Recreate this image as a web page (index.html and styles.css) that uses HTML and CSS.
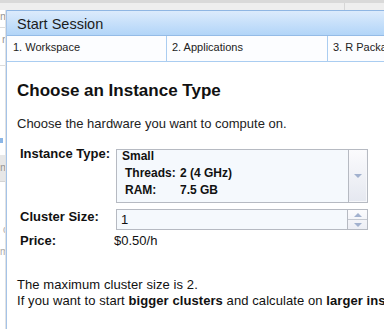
FILE: index.html
```html
<!DOCTYPE html>
<html lang="en">
<head>
    <meta charset="UTF-8">
    <meta name="viewport" content="width=device-width, initial-scale=1.0">
    <title>Start Session</title>
    <link rel="stylesheet" href="styles.css">
</head>
<body>

    <!-- page behind the dialog -->
    <div class="backdrop">
        <div class="bd-top"></div>
        <div class="bd-side">
            <div class="bd-row r1"><span>m</span></div>
            <div class="bd-row r2"><span>n</span></div>
            <div class="bd-row r3"></div>
            <div class="bd-row r4"><i class="bd-mark"></i></div>
            <div class="bd-row r5"></div>
            <div class="bd-row r6"><span>m</span></div>
            <div class="bd-row r7">
                <span class="small">c</span>
                <span class="small">r</span>
                <span class="small">m</span>
            </div>
        </div>
    </div>

    <!-- Start Session dialog -->
    <div class="dialog">
        <div class="dlg-title">Start Session</div>

        <div class="tabs">
            <div class="tab first">1. Workspace</div>
            <div class="tab second">2. Applications</div>
            <div class="tab">3. R Packages</div>
        </div>

        <div class="content">
            <h3>Choose an Instance Type</h3>
            <p class="lead">Choose the hardware you want to compute on.</p>

            <div class="form">
                <div class="row">
                    <label class="row-label">Instance Type:</label>
                    <div class="select">
                        <div class="select-body">
                            <div class="opt-name">Small</div>
                            <table class="opt-specs">
                                <tr><td class="spec-key">Threads:</td><td>2 (4 GHz)</td></tr>
                                <tr><td class="spec-key">RAM:</td><td>7.5 GB</td></tr>
                            </table>
                        </div>
                        <div class="select-btn"><i class="arrow down"></i></div>
                    </div>
                </div>

                <div class="row row-cluster">
                    <label class="row-label">Cluster Size:</label>
                    <div class="spin">
                        <div class="spin-value">1</div>
                        <div class="spin-btns">
                            <div class="spin-up"><i class="arrow up"></i></div>
                            <div class="spin-down"><i class="arrow down"></i></div>
                        </div>
                    </div>
                </div>

                <div class="row row-price">
                    <label class="row-label">Price:</label>
                    <span class="price">$0.50/h</span>
                </div>
            </div>

            <p class="note">
                The maximum cluster size is 2.<br>
                If you want to start <b>bigger clusters</b> and calculate on <b>larger instances</b>, please contact us.
            </p>
        </div>
    </div>

</body>
</html>
```

FILE: styles.css
```css
body {
    margin: 0;
    width: 384px;
    height: 329px;
    overflow: hidden;
    position: relative;
    background: #ffffff;
    font-family: "Liberation Sans", Arial, sans-serif;
    color: #222;
}

/* backdrop page */
.backdrop {
    height: 100%;
}

.bd-top {
    height: 7px;
    border-top: 3px solid #d9d9d9;
    background: linear-gradient(to right, #eeeeee 344px, #d6d6d6 344px, #d6d6d6 345px, #eeeeee 345px);
}

.bd-side {
    width: 5px;
    border-right: 1px solid #e2e2e2;
    height: 319px;
    overflow: hidden;
}

.bd-row {
    text-align: right;
    font-size: 11px;
    color: #999;
    white-space: nowrap;
}

.bd-row span {
    display: block;
    margin-right: -3px;
}

.r1 { height: 17px; line-height: 12px; border-bottom: 1px solid #dcdcdc; }
.r2 { height: 37px; line-height: 22px; border-bottom: 1px solid #dcdcdc; }
.r3 { height: 72px; }
.r4 { height: 6px; }
.r5 { height: 11px; }
.r6 { height: 26px; line-height: 24px; background: #e7e7e7; border-bottom: 1px solid #d4d4d4; }
.r7 { padding-top: 42px; }

.bd-row .small {
    font-size: 10px;
    line-height: 11px;
    color: #aaa;
}

.bd-mark {
    display: block;
    width: 3px;
    height: 5px;
    background: #8bb6e6;
}

/* dialog */
.dialog {
    position: absolute;
    left: 6px;
    top: 10px;
    width: 420px;
    height: 330px;
    background: #ffffff;
    border-left: 1px solid #a4c3e8;
}

.dlg-title {
    height: 23px;
    padding-top: 1px;
    padding-left: 10px;
    border-top: 1px solid #8fb6e3;
    border-bottom: 1px solid #94bbe6;
    background: linear-gradient(#dcebfc, #b2d5f8);
    font-size: 14.5px;
    line-height: 24px;
    color: #1c1c1c;
}

.tabs {
    display: flex;
    height: 25px;
    border-bottom: 1px solid #aacdf1;
    background: #fcfdff;
    font-size: 11px;
    line-height: 23px;
    color: #222;
}

.tab {
    padding-left: 5px;
    white-space: nowrap;
    box-sizing: border-box;
}

.tab.first {
    width: 160px;
    padding-left: 6px;
    border-right: 1px solid #aacdf1;
}

.tab.second {
    width: 161px;
    border-right: 1px solid #aacdf1;
}

.content {
    padding: 19px 10px 0;
}

h3 {
    margin: 0;
    font-size: 17px;
    line-height: 20px;
    font-weight: bold;
    color: #111;
}

.lead {
    margin: 15px 0 0;
    font-size: 13px;
    line-height: 16px;
}

/* form */
.form {
    margin: 14px 0 0 3px;
}

.row {
    display: flex;
    align-items: flex-start;
}

.row-label {
    width: 96px;
    flex-shrink: 0;
    font-size: 13px;
    line-height: 16px;
    font-weight: bold;
    color: #111;
}

.select {
    display: flex;
    width: 252px;
    height: 54px;
    margin-top: 3px;
    box-sizing: border-box;
    border: 1px solid #b6bac2;
    background: #f5f9fd;
}

.select-body {
    flex: 1;
    padding-left: 5px;
}

.opt-name {
    font-size: 12px;
    line-height: 12px;
    font-weight: bold;
    color: #111;
}

.opt-specs {
    margin: 3px 0 0 3px;
    border-collapse: collapse;
    font-size: 12px;
    font-weight: bold;
    color: #111;
}

.opt-specs td {
    padding: 0;
    height: 17px;
    line-height: 17px;
}

.spec-key {
    width: 55px;
}

.select-btn {
    width: 18px;
    border-left: 1px solid #b6bac2;
    background: linear-gradient(#fbfbfd, #e5e8f0);
    box-shadow: inset -1px -1px 0 #f6f7fa;
    display: flex;
    align-items: center;
    justify-content: center;
}

.arrow {
    display: block;
    width: 0;
    height: 0;
    border-left: 4px solid transparent;
    border-right: 4px solid transparent;
}

.arrow.down {
    border-top: 4px solid #a2b1ce;
}

.arrow.up {
    border-bottom: 4px solid #a2b1ce;
}

.row-cluster {
    margin-top: 6px;
}

.spin {
    display: flex;
    width: 252px;
    height: 21px;
    box-sizing: border-box;
    border: 1px solid #b6bac2;
    background: #f5f9fd;
}

.spin-value {
    flex: 1;
    padding-left: 4px;
    font-size: 13px;
    line-height: 19px;
    color: #111;
}

.spin-btns {
    width: 19px;
    border-left: 1px solid #b6bac2;
    display: flex;
    flex-direction: column;
    background: linear-gradient(#fbfbfd, #eceef4);
}

.spin-up,
.spin-down {
    flex: 1;
    display: flex;
    align-items: center;
    justify-content: center;
}

.spin-up {
    border-bottom: 1px solid #c4c8d0;
}

.row-price {
    margin-top: 3px;
}

.price {
    margin-left: -2px;
    font-size: 13px;
    line-height: 16px;
    color: #111;
}

.note {
    margin: 28px 0 0;
    font-size: 13px;
    line-height: 16px;
    letter-spacing: 0.08px;
    white-space: nowrap;
    color: #111;
}

.note b {
    font-weight: bold;
}
```
